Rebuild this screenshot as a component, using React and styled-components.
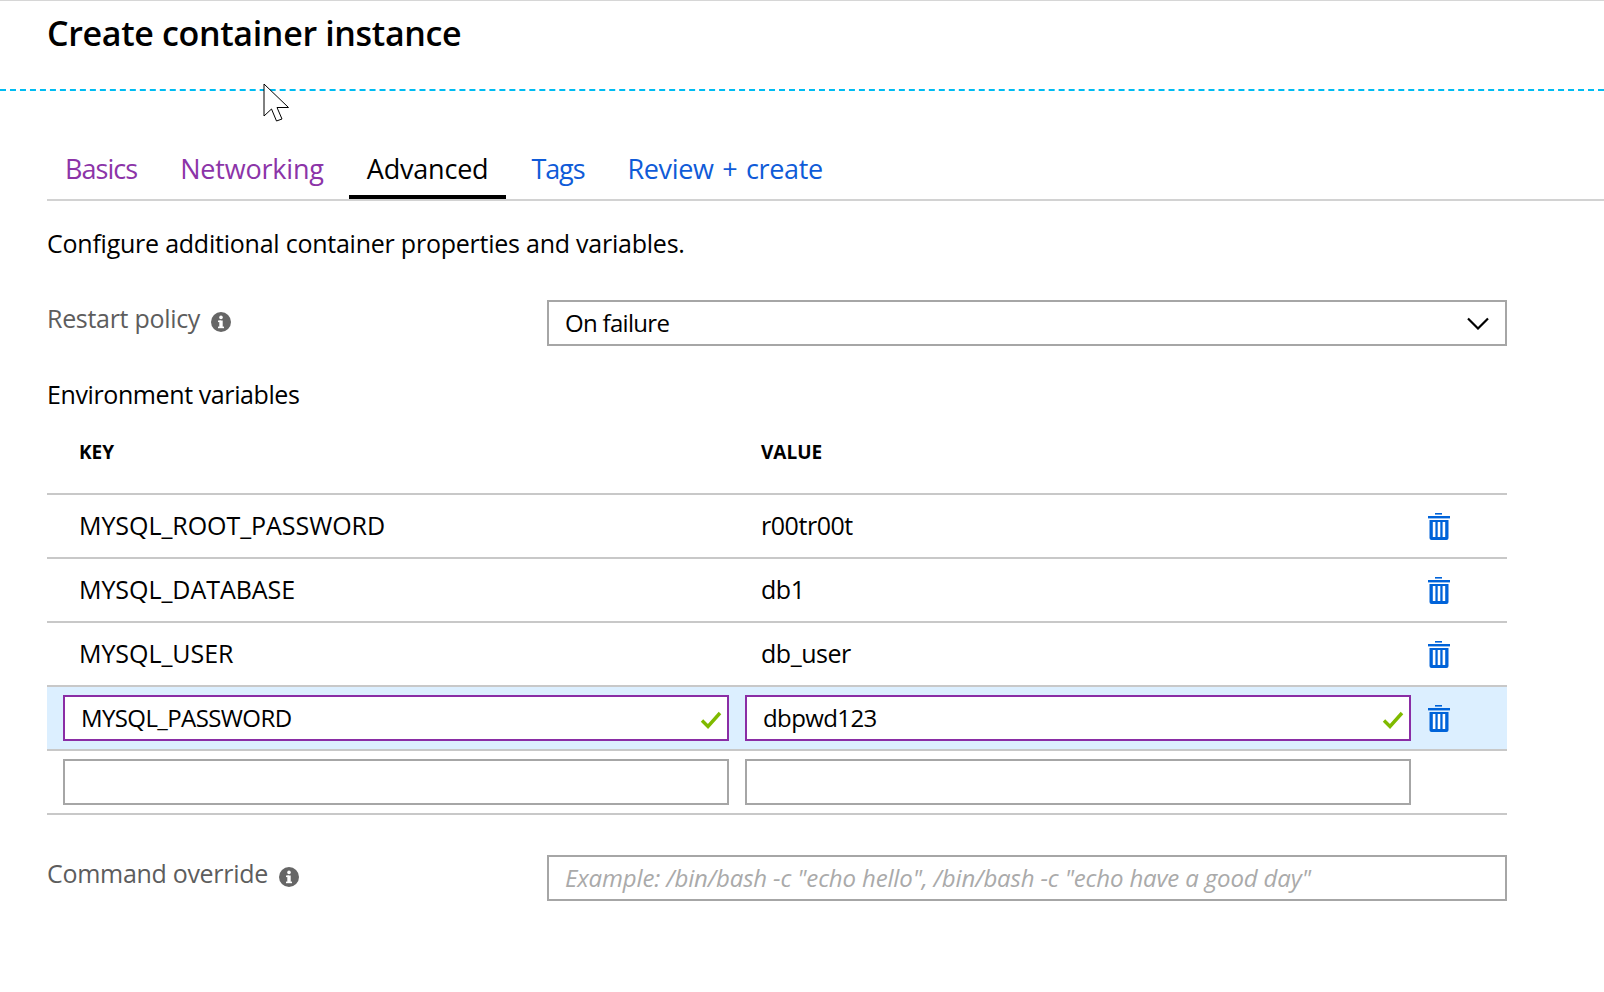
import React from "react";
import styled, { createGlobalStyle } from "styled-components";

const Global = createGlobalStyle`
  html, body { margin: 0; padding: 0; background: #fff; }
  body { font-family: "Open Sans", "Noto Sans", "Liberation Sans", sans-serif; color: #000; }
`;
const Page = styled.div`
  position: relative;
  width: 1604px;
  height: 992px;
  overflow: hidden;
  border-top: 1px solid #d6d6d6;
  box-sizing: border-box;
`;
const Header = styled.header`
  height: 88px;
  padding-left: 47px;
  border-bottom: 2px dashed #00bcf2;
`;
const Title = styled.h1`
  margin: 0;
  padding-top: 9px;
  font-size: 34px;
  line-height: 46px;
  font-weight: 600;
  letter-spacing: -0.34px;
`;
const Tabs = styled.nav`
  margin: 46px 0 0 47px;
  height: 62px;
  display: flex;
  border-bottom: 2px solid #d2d2d2;
`;
const Tab = styled.div`
  box-sizing: border-box;
  height: 62px;
  padding: 5px 18px 0;
  margin-right: 7px;
  font-size: 27px;
  line-height: 54px;
  letter-spacing: ${p => p.$spacing}px;
  word-spacing: ${p => p.$words || 0}px;
  color: ${p => p.$color};
  border-bottom: 4px solid ${p => (p.$active ? "#000" : "transparent")};
`;
const Body = styled.main`
  width: 1460px;
  margin-left: 47px;
`;
const Intro = styled.p`
  margin: 24px 0 0;
  font-size: 25px;
  line-height: 36px;
  letter-spacing: -0.235px;
`;
const FieldRow = styled.div`
  display: grid;
  grid-template-columns: 500px 960px;
  align-items: start;
  margin-top: ${p => p.$top}px;
`;
const Label = styled.label`
  display: flex;
  align-items: center;
  gap: 11px;
  height: 36px;
  font-size: 25px;
  letter-spacing: -0.3px;
  color: #5d5d5d;
`;
const Select = styled.div`
  height: 46px;
  box-sizing: border-box;
  border: 2px solid #a6a6a6;
  padding: 0 16px;
  display: flex;
  align-items: center;
  justify-content: space-between;
  font-size: 24px;
  letter-spacing: -0.7px;
`;
const SelectText = styled.span`
  padding-bottom: 1px;
`;
const Placeholder = styled.div`
  height: 46px;
  box-sizing: border-box;
  border: 2px solid #a6a6a6;
  padding: 0 16px 2px;
  display: flex;
  align-items: center;
  font-size: 24px;
  font-style: italic;
  letter-spacing: -0.15px;
  color: #aaa;
`;
const SectionLabel = styled.div`
  margin-top: 29px;
  font-size: 25px;
  line-height: 38px;
  letter-spacing: -0.4px;
`;
const Head = styled.div`
  display: grid;
  grid-template-columns: 682px 1fr;
  height: 82px;
  padding: 27px 0 0 32px;
  box-sizing: border-box;
  font-size: 19px;
  line-height: 24px;
  font-weight: 700;
  letter-spacing: 0;
  border-bottom: 2px solid #c8c8c8;
`;
const Row = styled.div`
  display: grid;
  grid-template-columns: 682px 667px 1fr;
  align-items: center;
  height: 64px;
  box-sizing: border-box;
  padding-left: 32px;
  font-size: 25px;
  border-bottom: 2px solid #c8c8c8;
`;
const KeyText = styled.span`
  padding-bottom: 2px;
  letter-spacing: -0.05px;
`;
const ValueText = styled.span`
  padding-bottom: 2px;
  letter-spacing: -0.45px;
`;
const EditRow = styled.div`
  display: grid;
  grid-template-columns: 666px 666px 1fr;
  column-gap: 16px;
  align-items: center;
  height: 64px;
  box-sizing: border-box;
  padding-left: 16px;
  background: ${p => (p.$selected ? "#dcefff" : "#fff")};
  border-bottom: 2px solid #c8c8c8;
`;
const InputBox = styled.div`
  height: 46px;
  box-sizing: border-box;
  position: relative;
  background: #fff;
  border: 2px solid ${p => (p.$valid ? "#8a2da5" : "#a6a6a6")};
  padding: 0 16px 2px;
  display: flex;
  align-items: center;
  font-size: 24px;
  letter-spacing: -0.6px;
`;
const Check = styled.svg`
  position: absolute;
  right: 5px;
  top: 13px;
`;
const IconSlot = styled.div`
  display: flex;
  align-items: center;
  padding-left: ${p => p.$pad}px;
`;
const Cursor = styled.svg`
  position: absolute;
  left: 263px;
  top: 82px;
`;

const InfoIcon = () => (
  <svg width="20" height="20" viewBox="0 0 20 20" style={{ marginTop: 8 }}>
    <circle cx="10" cy="10" r="10" fill="#666" />
    <rect x="8.3" y="8.5" width="3.4" height="7.5" fill="#fff" />
    <rect x="7" y="8.5" width="3" height="1.6" fill="#fff" />
    <rect x="7" y="14.6" width="6" height="1.6" fill="#fff" />
    <circle cx="10" cy="5.4" r="1.8" fill="#fff" />
  </svg>
);
const Trash = () => (
  <svg width="22" height="27" viewBox="0 0 22 27">
    <rect x="7" y="0" width="7" height="1.6" fill="#0063d9" />
    <rect x="0" y="3" width="22" height="2.4" fill="#0063d9" />
    <path d="M1.5 7h19v18a2 2 0 0 1-2 2h-15a2 2 0 0 1-2-2z" fill="#0063d9" />
    <rect x="4.8" y="9" width="2.6" height="15" fill="#fff" />
    <rect x="9.7" y="9" width="2.6" height="15" fill="#fff" />
    <rect x="14.6" y="9" width="2.6" height="15" fill="#fff" />
  </svg>
);
const CheckMark = () => (
  <Check width="22" height="20" viewBox="0 0 22 20">
    <path d="M2 10.5 8 16.5 20 3" fill="none" stroke="#7fba00" strokeWidth="3.4" />
  </Check>
);
const Chevron = () => (
  <svg width="22" height="13" viewBox="0 0 22 13">
    <path d="M1 1.5 11 11.5 21 1.5" fill="none" stroke="#000" strokeWidth="2.2" />
  </svg>
);

const rows = [
  ["MYSQL_ROOT_PASSWORD", "r00tr00t"],
  ["MYSQL_DATABASE", "db1"],
  ["MYSQL_USER", "db_user"],
];

export default function App() {
  return (
    <Page>
      <Global />
      <Header>
        <Title>Create container instance</Title>
      </Header>
      <Cursor width="27" height="40" viewBox="0 0 27 40">
        <path d="M1 1V33L8.5 26 13.5 38 19 36 14 24.5H25.5Z" fill="#fff" stroke="#000" strokeWidth="1" />
      </Cursor>
      <Tabs>
        <Tab $color="#8c34a8" $spacing={-0.95}>Basics</Tab>
        <Tab $color="#8c34a8" $spacing={-0.2}>Networking</Tab>
        <Tab $active $color="#000" $spacing={-0.2}>Advanced</Tab>
        <Tab $color="#0f5bd8" $spacing={-1.1}>Tags</Tab>
        <Tab $color="#0f5bd8" $spacing={-0.35} $words={2}>Review + create</Tab>
      </Tabs>
      <Body>
        <Intro>Configure additional container properties and variables.</Intro>
        <FieldRow $top={39}>
          <Label>Restart policy <InfoIcon /></Label>
          <Select><SelectText>On failure</SelectText> <Chevron /></Select>
        </FieldRow>
        <SectionLabel>Environment variables</SectionLabel>
        <Head><span>KEY</span><span>VALUE</span></Head>
        {rows.map(([k, v]) => (
          <Row key={k}>
            <KeyText>{k}</KeyText>
            <ValueText>{v}</ValueText>
            <IconSlot $pad={0}><Trash /></IconSlot>
          </Row>
        ))}
        <EditRow $selected>
          <InputBox $valid>MYSQL_PASSWORD<CheckMark /></InputBox>
          <InputBox $valid>dbpwd123<CheckMark /></InputBox>
          <IconSlot $pad={1}><Trash /></IconSlot>
        </EditRow>
        <EditRow>
          <InputBox />
          <InputBox />
          <span />
        </EditRow>
        <FieldRow $top={40}>
          <Label>Command override <InfoIcon /></Label>
          <Placeholder>Example: /bin/bash -c "echo hello", /bin/bash -c "echo have a good day"</Placeholder>
        </FieldRow>
      </Body>
    </Page>
  );
}
